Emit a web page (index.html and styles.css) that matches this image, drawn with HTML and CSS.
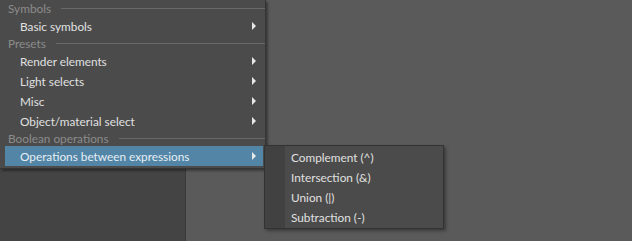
FILE: index.html
```html
<!DOCTYPE html>
<html>
<head>
<meta charset="utf-8">
<link rel="stylesheet" href="styles.css">
</head>
<body>
<div class="desk">
  <div class="panel"></div>
  <div class="menu">
    <div class="hdr"><span>Symbols</span><i class="rule"></i></div>
    <div class="item"><span>Basic symbols</span><i class="arrow"></i></div>
    <div class="hdr"><span>Presets</span><i class="rule"></i></div>
    <div class="item"><span>Render elements</span><i class="arrow"></i></div>
    <div class="item"><span>Light selects</span><i class="arrow"></i></div>
    <div class="item"><span>Misc</span><i class="arrow"></i></div>
    <div class="item"><span>Object/material select</span><i class="arrow"></i></div>
    <div class="hdr"><span>Boolean operations</span><i class="rule"></i></div>
    <div class="item active"><span>Operations between expressions</span><i class="arrow"></i></div>
  </div>
  <div class="sub">
    <div class="sitem">Complement (^)</div>
    <div class="sitem">Intersection (&amp;)</div>
    <div class="sitem">Union (|)</div>
    <div class="sitem">Subtraction (-)</div>
  </div>
</div>
</body>
</html>
```
FILE: styles.css
```css
html, body {
  margin: 0;
  padding: 0;
}
body {
  background: #5a5a5a;
  font-family: "Lato", "Liberation Sans", sans-serif;
  font-size: 11.8px;
}
.desk {
  position: relative;
  width: 632px;
  height: 241px;
  overflow: hidden;
}
.panel {
  position: absolute;
  left: 0;
  top: 0;
  width: 185px;
  height: 241px;
  background: #444444;
  border-right: 1px solid #3a3a3a;
}
.menu {
  position: absolute;
  left: 0;
  top: 0;
  width: 265px;
  padding: 1px 0 2px;
  background: #4b4b4b;
  border-right: 1px solid #353535;
  border-bottom: 1px solid #353535;
  box-shadow: 2px 2px 2px rgba(0, 0, 0, 0.35);
}
.hdr {
  height: 15px;
  display: flex;
  align-items: center;
  padding-left: 8px;
  color: #8c8c8c;
}
.rule {
  flex: 1;
  height: 1px;
  background: #686868;
  margin-left: 10px;
}
.item {
  height: 20px;
  display: flex;
  align-items: center;
  padding-left: 20px;
  padding-right: 9px;
  color: #e0e0e0;
}
.item span {
  flex: 1;
}
.item.active {
  background: #5285a6;
  margin-left: 5px;
  margin-right: 2px;
  padding-left: 15px;
  padding-right: 7px;
  color: #e6eef4;
}
.arrow {
  width: 0;
  height: 0;
  border-left: 4px solid #e8e8e8;
  border-top: 4px solid transparent;
  border-bottom: 4px solid transparent;
}
.sub {
  position: absolute;
  left: 264px;
  top: 145px;
  width: 178px;
  padding: 1px 0;
  background: linear-gradient(to right, #414141 0, #414141 20px, #4b4b4b 20px);
  border: 1px solid #333333;
  box-shadow: 2px 2px 3px rgba(0, 0, 0, 0.35);
}
.sitem {
  height: 20px;
  display: flex;
  align-items: center;
  padding-left: 26px;
  color: #e0e0e0;
}
```
